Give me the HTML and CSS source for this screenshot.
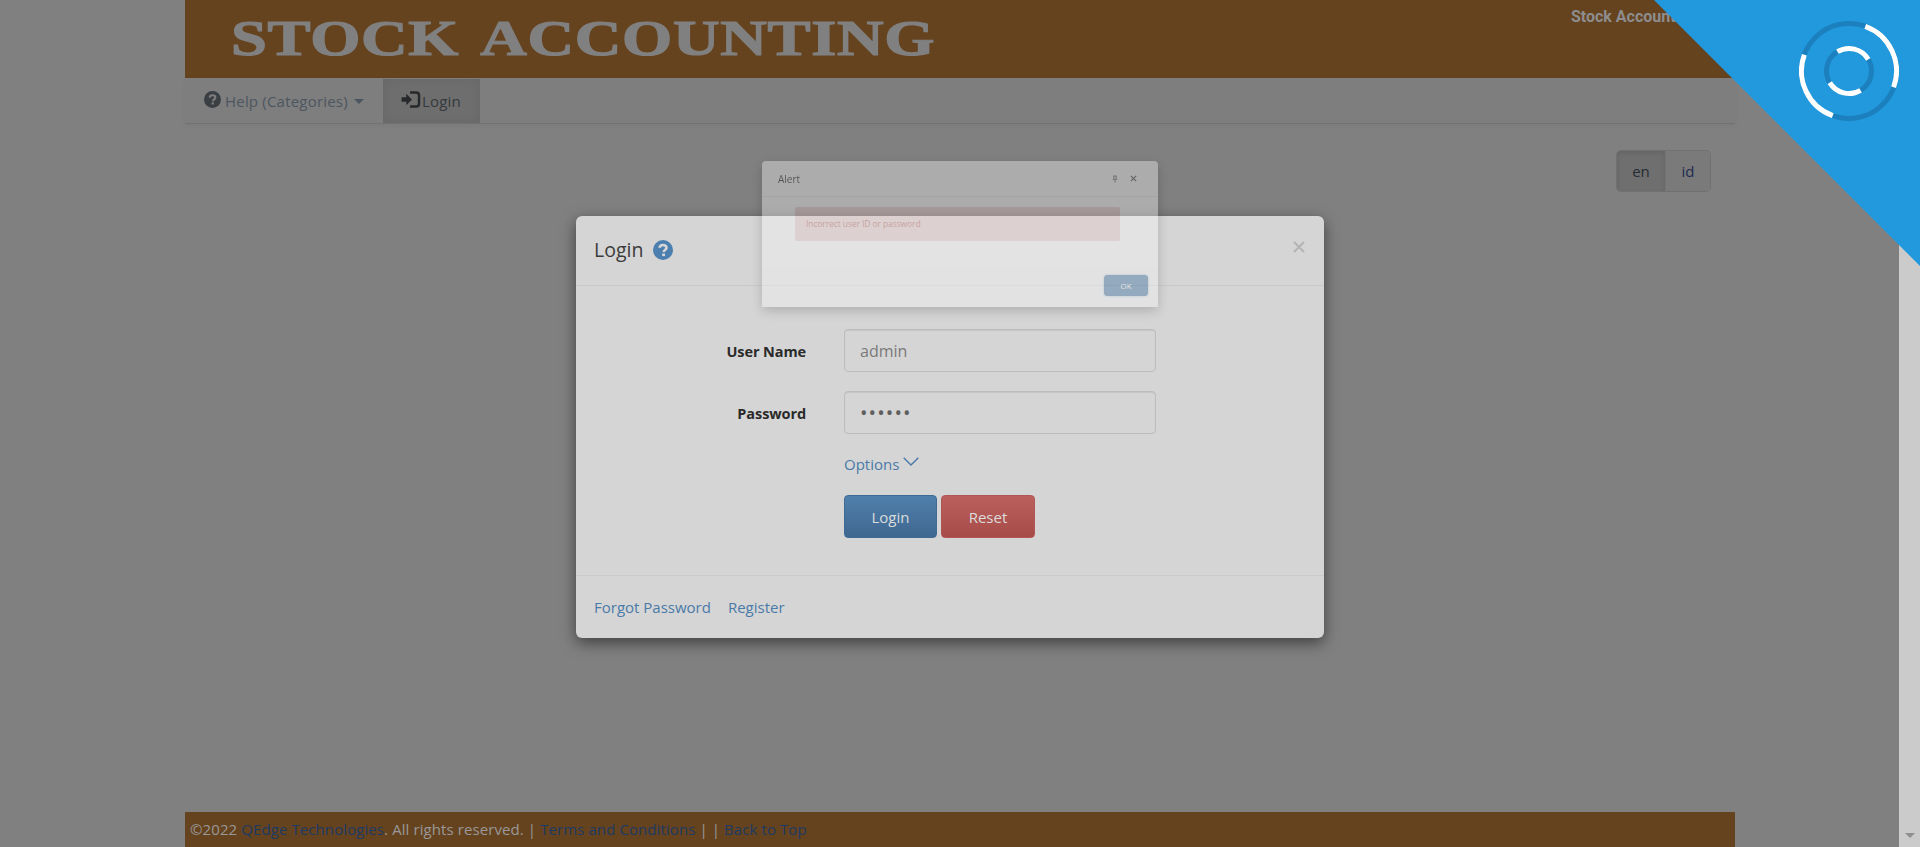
FILE: index.html
```html
<!DOCTYPE html>
<html lang="en">
<head>
<meta charset="utf-8">
<title>Stock Accounting</title>
<link rel="stylesheet" href="styles.css">
</head>
<body>
<div class="viewport">
  <div class="page">
    <div class="shell">
      <header class="brand">
        <div class="brand-title">STOCK ACCOUNTING</div>
        <div class="brand-sub">Stock Accounting</div>
      </header>
      <nav class="navbar">
        <a class="nav-item">
          <svg class="nav-icon" viewBox="0 0 24 24"><circle cx="12" cy="12" r="12" fill="#3a3f44"/><path d="M8 9.4c.3-2.2 1.9-3.4 4-3.4 2.300 0 4 1.400 4 3.300 0 2.700-3.300 2.600-3.300 5" fill="none" stroke="#7e7e7e" stroke-width="3"/><rect x="10.700" y="16" width="3.200" height="3" fill="#7e7e7e"/></svg>
          <span class="nav-text">Help (Categories)</span>
          <i class="caret"></i>
        </a>
        <a class="nav-item nav-active">
          <svg class="nav-icon-login" viewBox="0 0 20 18"><path d="M0 6.500h5V3l6 6-6 6v-3.500H0z" fill="#26282b"/><path d="M9 1.500h6.500a3 3 0 0 1 3 3v9a3 3 0 0 1-3 3H9" fill="none" stroke="#26282b" stroke-width="2.600"/></svg>
          <span class="nav-text">Login</span>
        </a>
      </nav>
      <main class="content">
        <div class="lang">
          <button class="lang-btn lang-on">en</button>
          <button class="lang-btn lang-off">id</button>
        </div>
      </main>
      <footer class="foot">
        <span>©2022 <a class="foot-link">QEdge Technologies</a>. All rights reserved. | <a class="foot-link">Terms and Conditions</a> | | <a class="foot-link">Back to Top</a></span>
      </footer>
    </div>
  </div>
  <div class="scrollbar"><i class="scroll-arrow"></i></div>
</div>

<section class="modal">
  <div class="modal-head">
    <h4 class="modal-title">Login</h4>
    <svg class="modal-help" viewBox="0 0 20 20"><circle cx="10" cy="10" r="10" fill="#4a7fb0"/><path d="M6.500 7.800C6.800 5.900 8.200 5 10 5c2 0 3.500 1.200 3.500 2.800 0 2.300-2.800 2.200-2.800 4.200" fill="none" stroke="#d6d6d6" stroke-width="2.600"/><rect x="9.200" y="13.500" width="2.800" height="2.600" fill="#d6d6d6"/></svg>
    <svg class="modal-close" viewBox="0 0 12 12"><path d="M1 1l10 10M11 1L1 11" stroke="#b4b4b4" stroke-width="2" fill="none"/></svg>
  </div>
  <div class="modal-body">
    <div class="form-row">
      <label class="form-label">User Name</label>
      <div class="form-input input-text">admin</div>
    </div>
    <div class="form-row">
      <label class="form-label">Password</label>
      <div class="form-input input-pass">••••••</div>
    </div>
    <div class="form-row options-row">
      <a class="options">Options
        <svg class="chevron" viewBox="0 0 16 9"><path d="M.7.7L8 8l7.300-7.300" fill="none" stroke="#4a7aa8" stroke-width="1.400"/></svg>
      </a>
    </div>
    <div class="form-row buttons-row">
      <div class="buttons">
        <button class="btn btn-login">Login</button>
        <button class="btn btn-reset">Reset</button>
      </div>
    </div>
  </div>
  <div class="modal-foot">
    <a class="foot-a">Forgot Password</a>
    <a class="foot-a">Register</a>
  </div>
</section>

<section class="alert">
  <div class="alert-head">
    <span class="alert-title">Alert</span>
    <span class="alert-tools">
      <svg class="alert-pin" viewBox="0 0 8 10"><path d="M1.500 1h5M2.500 1v4M5.500 1v4M.8 5.500h6.400M4 5.500V10" stroke="#333" stroke-width="1" fill="none"/></svg>
      <svg class="alert-x" viewBox="0 0 8 8"><path d="M1 1l6 6M7 1L1 7" stroke="#333" stroke-width="1.400" fill="none"/></svg>
    </span>
  </div>
  <div class="alert-body">
    <div class="alert-error">Incorrect user ID or password</div>
  </div>
  <div class="alert-foot"><button class="alert-ok">OK</button></div>
</section>

<aside class="ribbon">
  <svg class="ribbon-rings" viewBox="0 0 100 100">
    <circle cx="50" cy="50" r="47.500" class="ring-dark"/>
    <circle cx="50" cy="50" r="22.500" class="ring-dark"/>
    <circle cx="50" cy="50" r="47.500" class="ring-white" pathLength="360" transform="rotate(-70 50 50)"/>
    <circle cx="50" cy="50" r="22.500" class="ring-white" pathLength="360" transform="rotate(59 50 50)"/>
  </svg>
</aside>
</body>
</html>
```
FILE: styles.css
```css
* { box-sizing: border-box; }
html, body { margin: 0; height: 100%; overflow: hidden; }
body { font-family: "Open Sans", "Liberation Sans", sans-serif; font-size: 15px; background: #808080; color: #333; }
button { font-family: inherit; }

.viewport { display: flex; height: 847px; }
.page { flex: 1; background: #808080; }
.scrollbar { width: 21px; background: #cbcbcb; display: flex; flex-direction: column; justify-content: flex-end; align-items: center; padding-bottom: 9px; }
.scroll-arrow { width: 0; height: 0; border-left: 5px solid transparent; border-right: 5px solid transparent; border-top: 5px solid #8f8f8f; }

.shell { width: 1550px; height: 100%; margin-left: 185px; display: flex; flex-direction: column; }

.brand { height: 78px; background: #66431f; display: flex; justify-content: space-between; flex: none; }
.brand-title { font-family: "Liberation Serif", serif; font-weight: 700; font-size: 50px; line-height: 1; color: #808080; white-space: nowrap; margin: 13px 0 0 46px; transform: scaleX(1.29); transform-origin: left top; -webkit-text-stroke: 1.2px #808080; letter-spacing: .55px; word-spacing: 6px; }
.brand-sub { font-family: Roboto, "Liberation Sans", sans-serif; font-weight: 700; font-size: 16px; line-height: 20px; color: #8d8d8d; white-space: nowrap; margin: 7px 37px 0 0; }

.navbar { height: 46px; flex: none; display: flex; background: #7e7e7e; border-bottom: 1px solid #727272; box-shadow: 0 1px 4px rgba(0,0,0,.06); padding-top: 1px; }
.nav-item { display: flex; align-items: center; padding: 0 0 0 19px; width: 198px; color: #4d5660; line-height: 20px; gap: 4px; }
.nav-text { letter-spacing: .2px; }
.nav-icon { width: 17px; height: 17px; margin-top: -4px; }
.caret { width: 0; height: 0; border-left: 5px solid transparent; border-right: 5px solid transparent; border-top: 5px solid #4d5660; margin-left: 2px; }
.nav-active { width: 97px; padding-left: 18px; gap: 1px; background: #6e6e6e; box-shadow: inset 0 0 12px rgba(0,0,0,.06); color: #35393d; }
.nav-icon-login { width: 20px; height: 17px; margin-top: -4px; }

.content { flex: 1; display: flex; justify-content: flex-end; align-items: flex-start; padding: 26px 24px 0 0; }
.lang { display: flex; height: 42px; border: 1px solid #707070; border-radius: 5px; overflow: hidden; }
.lang-btn { border: 0; margin: 0; font-size: 15px; padding: 0; }
.lang-on { width: 48px; background: #6f6f6f; color: #272b33; box-shadow: inset 0 2px 5px rgba(0,0,0,.1); }
.lang-off { width: 45px; background: #7a7a7a; color: #1e2a50; border-left: 1px solid #757575; }

.foot { height: 35px; flex: none; background: #66431f; color: #989898; padding: 0 5px 2px; display: flex; align-items: center; font-size: 15px; letter-spacing: .09px; white-space: pre; }
.foot-link { color: #1c3a63; }

.modal { position: absolute; left: 576px; top: 216px; width: 748px; height: 422px; background: #d5d5d5; border-radius: 6px; box-shadow: 0 5px 15px rgba(0,0,0,.5); display: flex; flex-direction: column; }
.modal-head { height: 70px; flex: none; display: flex; align-items: center; padding: 0 18px 2px; gap: 10px; border-bottom: 1px solid #cacaca; }
.modal-title { margin: 0; font-size: 19.500px; font-weight: 400; color: #3b3b3b; line-height: 28px; }
.modal-help { width: 20px; height: 20px; }
.modal-close { width: 12px; height: 12px; margin-left: auto; margin-top: -5px; margin-right: 1px; }
.modal-body { flex: 1; padding-top: 43px; display: flex; flex-direction: column; }
.form-row { display: grid; grid-template-columns: 230px 312px; column-gap: 38px; align-items: center; margin-bottom: 19px; }
.form-label { grid-column: 1; text-align: right; font-weight: 700; font-size: 14.500px; letter-spacing: -.1px; line-height: 22px; padding-top: 2px; color: #2a2a2a; }
.form-input { grid-column: 2; height: 43px; border: 1px solid #bcbcbc; border-radius: 4px; box-shadow: inset 0 1px 1px rgba(0,0,0,.07); padding: 0 15px; line-height: 42px; font-size: 16px; color: #7a7a7a; }
.input-pass { font-size: 20px; letter-spacing: 1.100px; color: #5f5f5f; line-height: 41px; }
.options-row { margin-bottom: 0; height: 22px; }
.options { grid-column: 2; color: #4a7aa8; display: flex; align-items: center; gap: 4px; }
.chevron { width: 16px; height: 9px; margin-top: -5px; }
.buttons-row { margin: 0; padding-top: 20px; }
.buttons { grid-column: 2; display: flex; gap: 4px; }
.btn { height: 43px; border-radius: 4px; font-size: 15px; padding: 0; color: #dcdcdc; }
.btn-login { width: 93px; border: 1px solid #3f6a94; background: linear-gradient(#4f80ab, #3f6790); }
.btn-reset { width: 94px; border: 1px solid #b05654; background: linear-gradient(#ba605d, #a84b48); }
.modal-foot { height: 63px; flex: none; border-top: 1px solid #cacaca; display: flex; align-items: center; gap: 17px; padding: 0 18px 1px; }
.foot-a { color: #4a7aa8; }

.alert { position: absolute; left: 762px; top: 161px; width: 396px; height: 146px; background: #fff; border-radius: 4px; opacity: .35; box-shadow: 0 4px 12px rgba(0,0,0,.5); display: flex; flex-direction: column; font-size: 9px; }
.alert-head { height: 36px; flex: none; display: flex; align-items: center; justify-content: space-between; padding: 0 21px 0 16px; border-bottom: 1px solid #e4e4e4; }
.alert-title { font-size: 10px; color: #000; }
.alert-tools { display: flex; gap: 12px; align-items: center; }
.alert-pin { width: 6px; height: 8px; }
.alert-x { width: 7px; height: 7px; }
.alert-body { flex: 1; padding: 10px 38px 0 33px; }
.alert-error { height: 34px; border-radius: 2px; background: #edc8c8; color: #a94442; display: flex; align-items: center; padding: 0 0 2px 11px; font-size: 8.500px; letter-spacing: -.1px; }
.alert-foot { height: 40px; flex: none; background: #fdfdfd; display: flex; justify-content: flex-end; align-items: center; padding: 0 10px 4px 0; }
.alert-ok { width: 44px; height: 21px; border: 1px solid #1d5a94; border-radius: 3px; background: #1f5f99; color: #fff; font-size: 8px; padding: 0; box-shadow: 0 0 3px rgba(51,122,183,.6); }

.ribbon { position: absolute; left: 1654px; top: 0; width: 266px; height: 266px; background: #2299dd; clip-path: polygon(0 0, 100% 0, 100% 100%); }
.ribbon-rings { position: absolute; left: 145px; top: 21px; width: 100px; height: 100px; }
.ring-dark { fill: none; stroke: #1b80bd; stroke-width: 5; }
.ring-white { fill: none; stroke: #fff; stroke-width: 5; stroke-dasharray: 90 90; }
```
